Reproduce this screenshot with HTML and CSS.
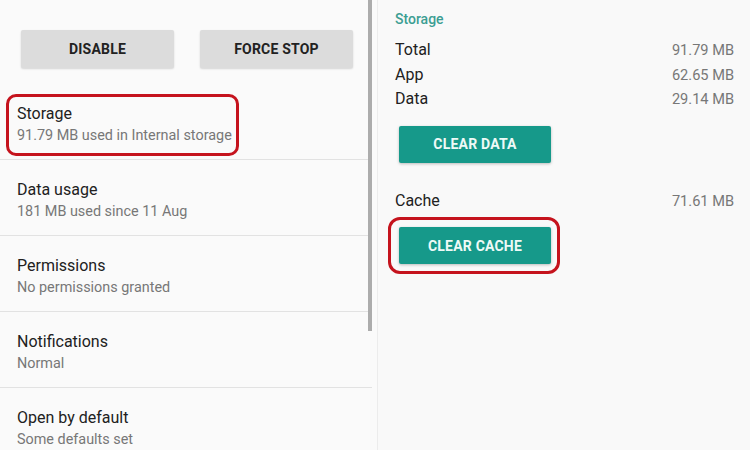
FILE: index.html
```html
<!DOCTYPE html>
<html lang="en">
<head>
    <meta charset="UTF-8">
    <title>App info - Storage</title>
    <link rel="stylesheet" href="styles.css">
</head>
<body>
    <div class="screen">
        <div class="app-info">
            <div class="action-buttons">
                <div class="gray-btn">DISABLE</div>
                <div class="gray-btn">FORCE STOP</div>
            </div>

            <div class="pref-item">
                <div class="mark">
                    <div class="pref-title">Storage</div>
                    <div class="pref-summary">91.79 MB used in Internal storage</div>
                </div>
            </div>
            <div class="pref-item">
                <div class="pref-title">Data usage</div>
                <div class="pref-summary">181 MB used since 11 Aug</div>
            </div>
            <div class="pref-item">
                <div class="pref-title">Permissions</div>
                <div class="pref-summary">No permissions granted</div>
            </div>
            <div class="pref-item">
                <div class="pref-title">Notifications</div>
                <div class="pref-summary">Normal</div>
            </div>
            <div class="pref-item">
                <div class="pref-title">Open by default</div>
                <div class="pref-summary">Some defaults set</div>
            </div>

            <!-- overlay scrollbar -->
            <div class="scrollbar"></div>
        </div>

        <div class="storage-page">
            <div class="category">Storage</div>
            <div class="size-row"><span>Total</span><span class="size">91.79 MB</span></div>
            <div class="size-row"><span>App</span><span class="size">62.65 MB</span></div>
            <div class="size-row"><span>Data</span><span class="size">29.14 MB</span></div>
            <div class="teal-btn clear-data">CLEAR DATA</div>

            <div class="size-row cache-row"><span>Cache</span><span class="size">71.61 MB</span></div>
            <div class="mark mark-btn">
                <div class="teal-btn">CLEAR CACHE</div>
            </div>
        </div>
    </div>
</body>
</html>
```

FILE: styles.css
```css
* {
    box-sizing: border-box;
}
body {
    margin: 0;
    font-family: Roboto, "Liberation Sans", Arial, sans-serif;
    background-color: #fafafa;
    color: #212121;
}
.screen {
    display: flex;
    width: 750px;
    height: 450px;
    overflow: hidden;
}
.app-info {
    position: relative;
    width: 372px;
    height: 450px;
    background-color: #fafafa;
}
.action-buttons {
    display: flex;
    gap: 26px;
    padding: 30px 0 0 21px;
    height: 84px;
}
.gray-btn {
    width: 153px;
    height: 38px;
    display: flex;
    align-items: center;
    justify-content: center;
    background-color: #dcdcdc;
    border-radius: 2px;
    box-shadow: 0 1px 2px rgba(0,0,0,0.15);
    font-size: 14px;
    font-weight: bold;
    color: #222;
    letter-spacing: 0.2px;
}
.pref-item {
    height: 76px;
    padding: 20px 17px 0 17px;
    border-bottom: 1px solid #e2e2e2;
}
.pref-title {
    font-size: 16px;
    line-height: 20px;
    color: #212121;
}
.pref-summary {
    margin-top: 2px;
    font-size: 14.4px;
    line-height: 20px;
    color: #777;
}
.mark {
    display: inline-block;
    border: 3px solid #c5131d;
    border-radius: 10px;
    margin: -10px -7px 0 -11px;
    padding: 7px 4px 7px 8px;
}
.scrollbar {
    position: absolute;
    top: 0;
    right: 0;
    width: 4px;
    height: 331px;
    background-color: #acacac;
}
.storage-page {
    flex: 1;
    margin-left: 5px;
    border-left: 1px solid #ececec;
    background-color: #f9f9f9;
    padding: 10px 16px 0 17px;
}
.category {
    font-size: 14px;
    line-height: 18px;
    font-weight: 500;
    color: #3c9e93;
    margin-bottom: 10px;
}
.size-row {
    display: flex;
    justify-content: space-between;
    font-size: 16px;
    line-height: 24.5px;
    color: #212121;
}
.size {
    font-size: 14.6px;
    color: #777;
}
.teal-btn {
    width: 152px;
    height: 37px;
    display: flex;
    align-items: center;
    justify-content: center;
    background-color: #16998a;
    border-radius: 2px;
    box-shadow: 0 1px 3px rgba(0,0,0,0.25);
    color: #eefaf7;
    font-size: 14px;
    font-weight: bold;
    letter-spacing: 0.2px;
}
.clear-data {
    margin: 14px 0 0 4px;
}
.cache-row {
    margin-top: 26px;
}
.mark-btn {
    border-radius: 12px;
    margin: 4px 0 0 -7px;
    padding: 7px 6px 7px 8px;
}
```
